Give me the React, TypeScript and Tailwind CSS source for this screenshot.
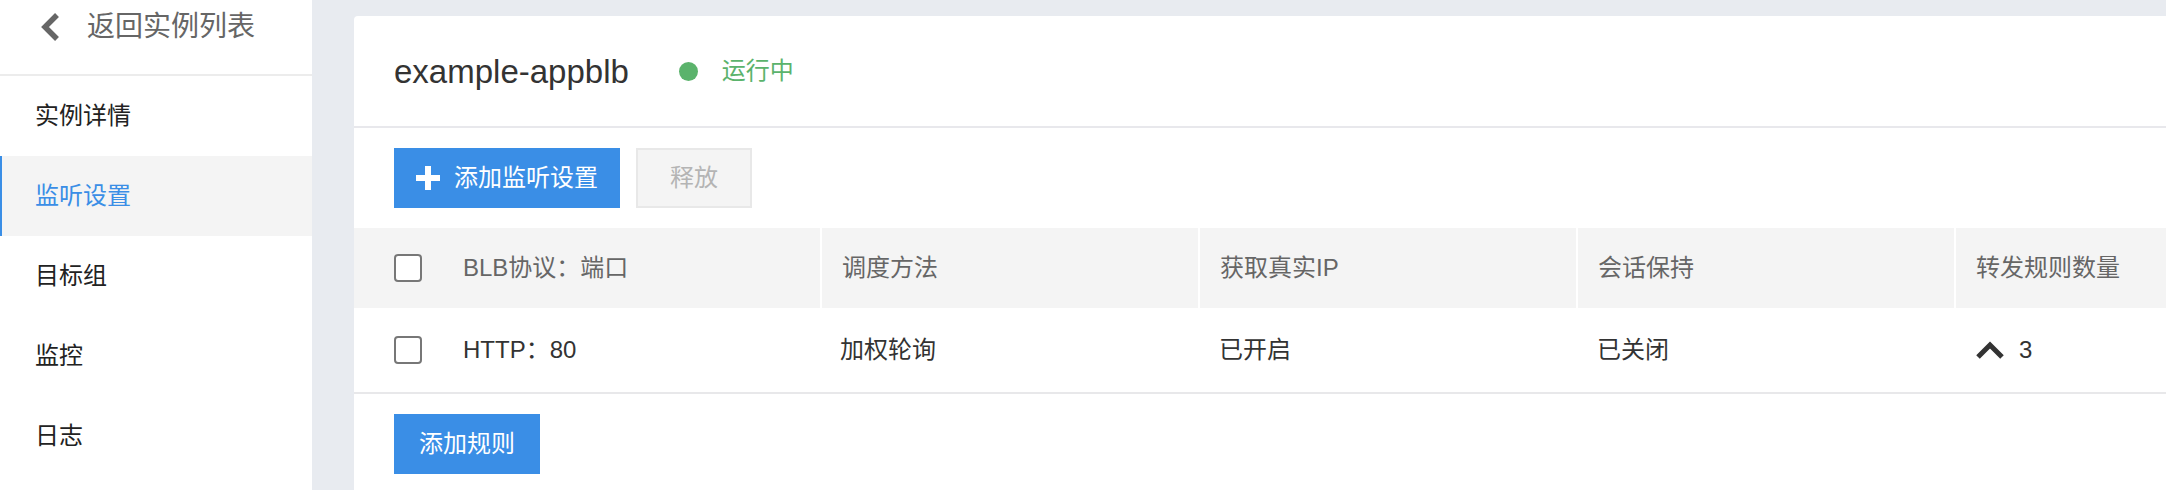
import React from "react";

const navItems = ["实例详情", "监听设置", "目标组", "监控", "日志"];

const columns = ["BLB协议：端口", "调度方法", "获取真实IP", "会话保持", "转发规则数量"];

function Checkbox() {
  return <span className="block w-[28px] h-[28px] rounded-[4px] border-2 border-[#777] bg-white shrink-0" />;
}

export default function App() {
  return (
    <div className="flex h-[490px] w-[2166px] overflow-hidden bg-[#e8ebf0] font-['Liberation_Sans','Noto_Sans_CJK_SC',sans-serif]">
      {/* sidebar */}
      <aside className="w-[312px] shrink-0 bg-white flex flex-col">
        <div className="h-[74px]">
          <div className="h-[53px] flex items-center pl-[40px]">
            <svg width="20" height="30" viewBox="0 0 20 30" fill="none">
              <polyline points="17,3 5,15 17,27" stroke="#666" strokeWidth="5.5" />
            </svg>
            <span className="ml-[27px] text-[28px] text-[#666] leading-none">返回实例列表</span>
          </div>
        </div>
        <div className="h-[2px] bg-[#ececec]" />
        {navItems.map((item) =>
          item === "监听设置" ? (
            <div
              key={item}
              className="h-[80px] flex items-center pl-[33px] border-l-2 border-[#3a8ee6] bg-[#f4f4f4] text-[24px] text-[#3a8ee6]"
            >
              {item}
            </div>
          ) : (
            <div key={item} className="h-[80px] flex items-center pl-[35px] text-[24px] text-[#222]">
              {item}
            </div>
          )
        )}
      </aside>

      {/* main */}
      <main className="flex-1 min-w-0 pl-[42px] pt-[16px]">
        <div className="h-full bg-white rounded-tl-[4px] overflow-hidden">
          <div className="h-[110px] flex items-center px-[40px]">
            <span className="text-[33px] text-[#333] leading-none">example-appblb</span>
            <span className="ml-[50px] w-[19px] h-[19px] rounded-full bg-[#5bb36c]" />
            <span className="ml-[24px] text-[24px] text-[#5bb36c]">运行中</span>
          </div>
          <div className="h-[2px] bg-[#e8e8ec]" />

          <div className="flex gap-[16px] px-[40px] py-[20px]">
            <button className="h-[60px] w-[226px] bg-[#3a8ee6] text-white text-[24px] flex items-center pl-[22px]">
              <svg width="24" height="24" viewBox="0 0 24 24" fill="#fff">
                <rect x="9" y="0" width="6" height="24" />
                <rect x="0" y="9" width="24" height="6" />
              </svg>
              <span className="ml-[14px]">添加监听设置</span>
            </button>
            <button className="h-[60px] w-[116px] bg-[#f4f4f4] border-2 border-[#e8e8e8] text-[24px] text-[#b4b4b4] flex items-center justify-center">
              释放
            </button>
          </div>

          {/* table head */}
          <div className="grid grid-cols-[466px_376px_376px_376px_376px_376px] gap-x-[2px] h-[80px]">
            {columns.map((c, i) => (
              <div
                key={c}
                className={
                  i === 0
                    ? "bg-[#f4f4f4] flex items-center pl-[40px] text-[24px] text-[#666]"
                    : "bg-[#f4f4f4] flex items-center pl-[20px] text-[24px] text-[#666]"
                }
              >
                {i === 0 && <Checkbox />}
                <span className={i === 0 ? "ml-[41px]" : ""}>{c}</span>
              </div>
            ))}
            <div className="bg-[#f4f4f4]" />
          </div>

          {/* table row */}
          <div className="grid grid-cols-[466px_376px_376px_376px_376px] gap-x-[2px] h-[86px] border-b-2 border-[#e8e8ea] text-[24px] text-[#333]">
            <div className="flex items-center pl-[40px]">
              <Checkbox />
              <span className="ml-[41px]">HTTP：80</span>
            </div>
            <div className="flex items-center pl-[18px]">加权轮询</div>
            <div className="flex items-center pl-[19px]">已开启</div>
            <div className="flex items-center pl-[19px]">已关闭</div>
            <div className="flex items-center pl-[19px]">
              <svg width="30" height="20" viewBox="0 0 30 20" fill="none">
                <polyline points="3,17 15,5 27,17" stroke="#333" strokeWidth="5" />
              </svg>
              <span className="ml-[14px]">3</span>
            </div>
          </div>

          <div className="px-[40px] pt-[20px]">
            <button className="h-[60px] w-[146px] bg-[#3a8ee6] text-white text-[24px] flex items-center justify-center">
              添加规则
            </button>
          </div>
        </div>
      </main>
    </div>
  );
}
